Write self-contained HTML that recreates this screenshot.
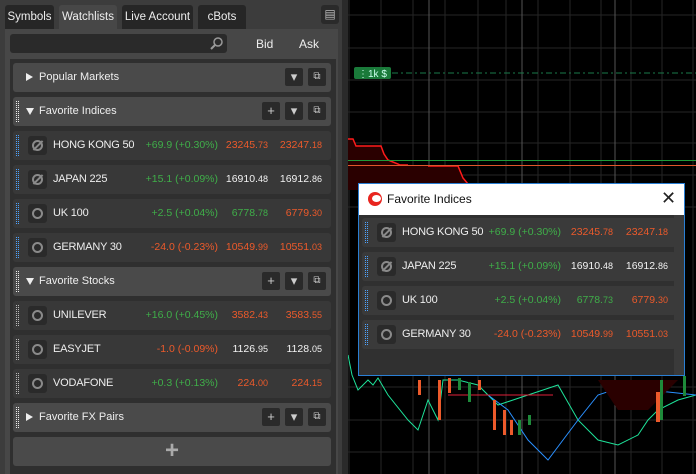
<!DOCTYPE html>
<html><head><meta charset="utf-8"><style>
*{box-sizing:border-box;margin:0;padding:0}
body{width:696px;height:474px;overflow:hidden;background:#000;font-family:"Liberation Sans",sans-serif;font-size:11px;color:#e6e6e6;position:relative}
.left{position:absolute;left:0;top:0;width:342px;height:474px;background:#3c3c3c}
.sep{position:absolute;left:342px;top:0;width:6px;height:474px;background:#2a2a2a}
.tab{position:absolute;top:5px;height:24px;background:#262626;border-radius:3px 3px 0 0;line-height:24px;text-align:center;font-size:11.5px;color:#eee}
.tab.act{background:#474747}
.body{position:absolute;left:5px;top:29px;width:333px;height:445px;background:#474747}
.search{position:absolute;left:10px;top:34px;width:217px;height:19px;background:#2a2a2a;border-radius:3px}
.list{position:absolute;left:10px;top:59px;width:326px;height:415px;background:#2f2f2f}
.hdr,.row{position:absolute;left:13px;width:318px;height:29px;border-radius:3px}
.hdr{background:#4a4a4a}
.row{background:#383838}
.hdr .t{position:absolute;left:26px;top:8px;font-size:11px;color:#eee}
.grip{position:absolute;left:3px;top:4px;width:3px;height:21px;background:repeating-linear-gradient(to bottom,transparent 0 1px,#383838 1px 2px),repeating-linear-gradient(to right,#4da3ff 0 1px,transparent 1px 2px)}
.hdr .grip{background:repeating-linear-gradient(to bottom,transparent 0 1px,#4a4a4a 1px 2px),repeating-linear-gradient(to right,#eee 0 1px,transparent 1px 2px)}
.row .grip.w{background:repeating-linear-gradient(to bottom,transparent 0 1px,#383838 1px 2px),repeating-linear-gradient(to right,#bbb 0 1px,transparent 1px 2px)}
.win .row .grip{background:repeating-linear-gradient(to bottom,transparent 0 1px,#3a3a3a 1px 2px),repeating-linear-gradient(to right,#4da3ff 0 1px,transparent 1px 2px)}
.tri{position:absolute;left:13px;top:10px;width:0;height:0}
.tri.r{border-left:7px solid #eee;border-top:4px solid transparent;border-bottom:4px solid transparent}
.tri.d{border-top:7px solid #eee;border-left:4px solid transparent;border-right:4px solid transparent;top:11px}
.btn{position:absolute;top:5px;width:18px;height:18px;background:#2a2a2a;border-radius:2px;color:#ccc;text-align:center;line-height:18px;font-size:13px}
.ic{position:absolute;left:15px;top:5px;width:19px;height:19px;background:#2a2a2a;border-radius:3px}
.ic:after{content:"";position:absolute;left:4px;top:4px;width:11px;height:11px;border:2.2px solid #8a8a8a;border-radius:50%;box-sizing:border-box}
.ic.s:before{content:"";position:absolute;left:9px;top:3px;width:2px;height:13px;background:#8a8a8a;transform:rotate(45deg)}
.nm{position:absolute;left:40px;top:8px;font-size:11px;letter-spacing:-0.2px;color:#eee}
.ch{position:absolute;right:113px;top:8px;font-size:10.5px;text-align:right;white-space:nowrap}
.bid{position:absolute;right:63px;top:8px;font-size:10.5px;text-align:right;white-space:nowrap}
.ask{position:absolute;right:9px;top:8px;font-size:10.5px;text-align:right;white-space:nowrap}
.g{color:#3fae49}.r{color:#ec5a2b}.w{color:#f2f2f2}
small{font-size:9px}
.win{position:absolute;left:358px;top:183px;width:327px;height:193px;border:1px solid #2a7fd4;background:#303030}
.wt{position:absolute;left:0;top:0;width:325px;height:31px;background:#fff;color:#111;font-size:12px}
.win .row{left:3px;width:314px;background:#3a3a3a}
.win .ch{right:115px}.win .ask{right:8px}
</style></head><body>
<svg style="position:absolute;left:348px;top:0" width="348" height="474">
<g stroke="#262626" stroke-width="1">
<line x1="1" y1="0" x2="1" y2="474"/><line x1="33" y1="0" x2="33" y2="474"/><line x1="65" y1="0" x2="65" y2="474"/><line x1="97" y1="0" x2="97" y2="474"/><line x1="130" y1="0" x2="130" y2="474"/><line x1="158" y1="0" x2="158" y2="474"/><line x1="190" y1="0" x2="190" y2="474"/><line x1="222" y1="0" x2="222" y2="474"/><line x1="253" y1="0" x2="253" y2="474"/><line x1="283" y1="0" x2="283" y2="474"/><line x1="314" y1="0" x2="314" y2="474"/><line x1="345" y1="0" x2="345" y2="474"/>
<line x1="0" y1="15" x2="348" y2="15"/><line x1="0" y1="48" x2="348" y2="48"/><line x1="0" y1="80" x2="348" y2="80"/><line x1="0" y1="112" x2="348" y2="112"/><line x1="0" y1="143" x2="348" y2="143"/><line x1="0" y1="175" x2="348" y2="175"/><line x1="0" y1="207" x2="348" y2="207"/><line x1="0" y1="387" x2="348" y2="387"/><line x1="0" y1="420" x2="348" y2="420"/><line x1="0" y1="452" x2="348" y2="452"/>
</g>
<g stroke="#555"><line x1="81" y1="0" x2="81" y2="474"/><line x1="174" y1="0" x2="174" y2="474"/><line x1="267" y1="0" x2="267" y2="474"/></g>
<path d="M0 139 L5 139 L8 146 L33 146 L36 154 L40 160 L50 164 L80 166 L110 166 L115 178 L125 190 L0 190Z" fill="#2a0000"/>
<path d="M0 139 L5 139 L8 146 L33 146 L36 154 L40 160 L50 164 L52 165 L60 165 M80 166 L110 166 L115 178 L125 190" stroke="#ff1a1a" fill="none" stroke-width="1.5"/>
<line x1="0" y1="160.5" x2="348" y2="160.5" stroke="#1e9b3a"/>
<line x1="0" y1="165.5" x2="348" y2="165.5" stroke="#e0552a"/>
<line x1="44" y1="73" x2="348" y2="73" stroke="#1a7a4a" stroke-dasharray="6,3,2,3"/>
<rect x="6" y="67" width="37" height="12" rx="2" fill="#1a7a3a"/>
<text x="10" y="77" font-size="10" fill="#cfe" font-family="Liberation Sans">⋮1k $</text>
<path d="M0 355 L4 375 L10 390 L20 380 L25 385 L30 378 L40 395 L60 420 L70 430 L80 400 L90 420 L95 380 L110 380 L130 385 L150 405 L180 395 L210 385 L230 420 L250 440 L270 445 L290 435 L300 420 L310 410 L330 400 L348 395" stroke="#1ee39a" fill="none"/>
<path d="M140 395 L160 410 L180 440 L200 460 L230 420 L250 395 L280 385 L300 390 L320 392 L348 395" stroke="#2a90ff" fill="none"/>
<path d="M250 380 L330 380 L300 410 L270 410Z" fill="#2a0000"/>
<line x1="100" y1="395" x2="205" y2="395" stroke="#e0203a"/>
<g fill="#ec5a2b"><rect x="90" y="380" width="3" height="40"/><rect x="145" y="400" width="3" height="30"/><rect x="155" y="410" width="3" height="25"/><rect x="162" y="420" width="3" height="15"/><rect x="308" y="392" width="4" height="30"/><rect x="70" y="380" width="3" height="15"/><rect x="100" y="378" width="3" height="15"/><rect x="130" y="380" width="3" height="10"/></g>
<g fill="#1e8a3a"><rect x="120" y="382" width="3" height="20"/><rect x="170" y="420" width="3" height="15"/><rect x="180" y="415" width="3" height="10"/><rect x="312" y="380" width="3" height="40"/><rect x="335" y="376" width="3" height="20"/><rect x="110" y="378" width="3" height="12"/></g>
</svg>
<div class="left"></div>
<div class="tab" style="left:5px;width:49px">Symbols</div>
<div class="tab act" style="left:59px;width:58px">Watchlists</div>
<div class="tab" style="left:122px;width:71px">Live Account</div>
<div class="tab" style="left:198px;width:48px">cBots</div>
<div style="position:absolute;left:321px;top:5px;width:18px;height:19px;background:#2a2a2a;border-radius:3px;color:#bbb;font-size:12px;text-align:center;line-height:19px">▤</div>
<div class="body"></div>
<div class="search"><svg style="position:absolute;right:4px;top:3px" width="13" height="13"><circle cx="8" cy="5" r="4" stroke="#999" stroke-width="1.5" fill="none"/><line x1="5" y1="8" x2="1" y2="12" stroke="#999" stroke-width="2"/></svg></div>
<div style="position:absolute;left:256px;top:37px;color:#eee;font-size:12px">Bid</div>
<div style="position:absolute;left:299px;top:37px;color:#eee;font-size:12px">Ask</div>
<div class="list"></div>
<div class="sep"></div>

<div class="hdr" style="top:63px"><div class="tri r"></div><div class="t">Popular Markets</div><div class="btn" style="left:272px">▾</div><div class="btn" style="left:295px;font-size:10px">⧉</div></div>
<div class="hdr" style="top:97px"><div class="grip"></div><div class="tri d"></div><div class="t">Favorite Indices</div><div class="btn" style="left:249px">+</div><div class="btn" style="left:272px">▾</div><div class="btn" style="left:295px;font-size:10px">⧉</div></div>
<div class="row" style="top:131px"><div class="grip"></div><div class="ic s"></div><div class="nm">HONG KONG 50</div><div class="ch g">+69.9 (+0.30%)</div><div class="bid r">23245.<small>73</small></div><div class="ask r">23247.<small>18</small></div></div>
<div class="row" style="top:165px"><div class="grip"></div><div class="ic s"></div><div class="nm">JAPAN 225</div><div class="ch g">+15.1 (+0.09%)</div><div class="bid w">16910.<small>48</small></div><div class="ask w">16912.<small>86</small></div></div>
<div class="row" style="top:199px"><div class="grip"></div><div class="ic"></div><div class="nm">UK 100</div><div class="ch g">+2.5 (+0.04%)</div><div class="bid g">6778.<small>78</small></div><div class="ask r">6779.<small>30</small></div></div>
<div class="row" style="top:233px"><div class="grip"></div><div class="ic"></div><div class="nm">GERMANY 30</div><div class="ch r">-24.0 (-0.23%)</div><div class="bid r">10549.<small>99</small></div><div class="ask r">10551.<small>03</small></div></div>
<div class="hdr" style="top:267px"><div class="grip"></div><div class="tri d"></div><div class="t">Favorite Stocks</div><div class="btn" style="left:249px">+</div><div class="btn" style="left:272px">▾</div><div class="btn" style="left:295px;font-size:10px">⧉</div></div>
<div class="row" style="top:301px"><div class="grip w"></div><div class="ic"></div><div class="nm">UNILEVER</div><div class="ch g">+16.0 (+0.45%)</div><div class="bid r">3582.<small>43</small></div><div class="ask r">3583.<small>55</small></div></div>
<div class="row" style="top:335px"><div class="grip w"></div><div class="ic"></div><div class="nm">EASYJET</div><div class="ch r">-1.0 (-0.09%)</div><div class="bid w">1126.<small>95</small></div><div class="ask w">1128.<small>05</small></div></div>
<div class="row" style="top:369px"><div class="grip w"></div><div class="ic"></div><div class="nm">VODAFONE</div><div class="ch g">+0.3 (+0.13%)</div><div class="bid r">224.<small>00</small></div><div class="ask r">224.<small>15</small></div></div>
<div class="hdr" style="top:403px"><div class="grip"></div><div class="tri r"></div><div class="t">Favorite FX Pairs</div><div class="btn" style="left:249px">+</div><div class="btn" style="left:272px">▾</div><div class="btn" style="left:295px;font-size:10px">⧉</div></div>
<div class="hdr" style="top:437px;text-align:center;color:#aaa;font-size:24px;line-height:28px;font-weight:bold">+</div>

<div class="win">
<div class="wt"><div style="position:absolute;left:9px;top:8px;width:14px;height:14px;border-radius:50%;background:#e8251f"></div><div style="position:absolute;left:13px;top:11px;width:9px;height:7px;border-radius:50%;background:#fff"></div><div style="position:absolute;left:28px;top:8px">Favorite Indices</div><div style="position:absolute;left:302px;top:4px;font-size:18px;color:#222">✕</div></div>
<div class="row" style="top:34px"><div class="grip"></div><div class="ic s"></div><div class="nm">HONG KONG 50</div><div class="ch g">+69.9 (+0.30%)</div><div class="bid r">23245.<small>78</small></div><div class="ask r">23247.<small>18</small></div></div>
<div class="row" style="top:68px"><div class="grip"></div><div class="ic s"></div><div class="nm">JAPAN 225</div><div class="ch g">+15.1 (+0.09%)</div><div class="bid w">16910.<small>48</small></div><div class="ask w">16912.<small>86</small></div></div>
<div class="row" style="top:102px"><div class="grip"></div><div class="ic"></div><div class="nm">UK 100</div><div class="ch g">+2.5 (+0.04%)</div><div class="bid g">6778.<small>73</small></div><div class="ask r">6779.<small>30</small></div></div>
<div class="row" style="top:136px"><div class="grip"></div><div class="ic"></div><div class="nm">GERMANY 30</div><div class="ch r">-24.0 (-0.23%)</div><div class="bid r">10549.<small>99</small></div><div class="ask r">10551.<small>03</small></div></div>
<div style="position:absolute;right:0;top:31px;width:10px;height:160px;background:#3a3a3a"></div>
</div>
</body></html>
